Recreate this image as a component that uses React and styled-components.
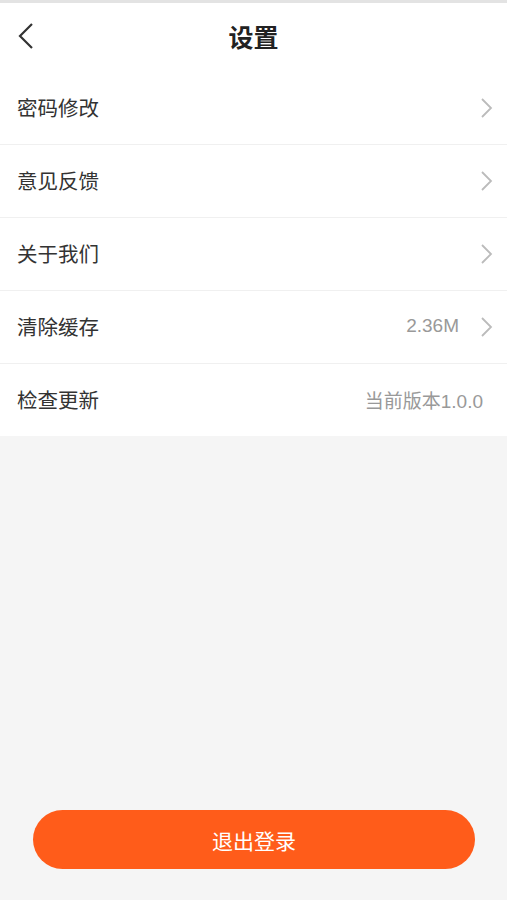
import React from 'react';
import styled, { createGlobalStyle } from 'styled-components';

const GlobalStyle = createGlobalStyle`
    html, body {
        margin: 0;
        padding: 0;
        background-color: #f5f5f5;
        font-family: "Liberation Sans", "Noto Sans CJK SC", sans-serif;
    }
`;

const Page = styled.div`
    min-height: 900px;
    display: flex;
    flex-direction: column;
    background-color: #f5f5f5;
    border-top: 3px solid #e3e3e3;
    box-sizing: border-box;
`;

const Header = styled.div`
    height: 69px;
    display: grid;
    grid-template-columns: 60px 1fr 60px;
    align-items: center;
    background-color: #fff;
`;

const BackButton = styled.button`
    border: none;
    background: none;
    padding: 0 0 4px 17px;
    display: flex;
    align-items: center;
    cursor: pointer;
`;

const Title = styled.h1`
    margin: 0 0 3px;
    text-align: center;
    font-size: 25px;
    font-weight: bold;
    color: #222;
`;

const List = styled.div`
    background-color: #fff;
`;

const Row = styled.div`
    height: 72px;
    display: flex;
    align-items: center;
    padding: 0 14px 0 17px;
    border-bottom: ${(props) => (props.last ? 'none' : '1px solid #f0f0f0')};
`;

const Label = styled.span`
    flex: 1;
    font-size: 20.5px;
    color: #333;
    margin-bottom: 2px;
`;

const Value = styled.span`
    font-size: 19px;
    color: #999;
    margin-right: ${(props) => (props.arrow ? '20px' : '10px')};
    margin-bottom: 2px;
`;

const Footer = styled.div`
    margin-top: auto;
    padding: 0 32px 31px 33px;
`;

const LogoutButton = styled.button`
    width: 100%;
    height: 59px;
    border: none;
    border-radius: 30px;
    background-color: #ff5c1a;
    color: #fff;
    font-family: inherit;
    font-size: 21px;
    cursor: pointer;
`;

const Chevron = () => (
    <svg width="14" height="22" viewBox="0 0 14 22">
        <path d="M3 2 L12 11 L3 20" fill="none" stroke="#bbb" strokeWidth="1.8" />
    </svg>
);

const BackIcon = () => (
    <svg width="18" height="28" viewBox="0 0 18 28">
        <path d="M15 2 L3 14 L15 26" fill="none" stroke="#333" strokeWidth="2.2" />
    </svg>
);

const items = [
    { label: '密码修改', arrow: true },
    { label: '意见反馈', arrow: true },
    { label: '关于我们', arrow: true },
    { label: '清除缓存', value: '2.36M', arrow: true },
    { label: '检查更新', value: '当前版本1.0.0' },
];

function App() {
    return (
        <>
            <GlobalStyle />
            <Page>
                <Header>
                    <BackButton>
                        <BackIcon />
                    </BackButton>
                    <Title>设置</Title>
                    <div />
                </Header>
                <List>
                    {items.map((item, i) => (
                        <Row key={item.label} last={i === items.length - 1}>
                            <Label>{item.label}</Label>
                            {item.value && <Value arrow={item.arrow}>{item.value}</Value>}
                            {item.arrow && <Chevron />}
                        </Row>
                    ))}
                </List>
                <Footer>
                    <LogoutButton>退出登录</LogoutButton>
                </Footer>
            </Page>
        </>
    );
}

export default App;
